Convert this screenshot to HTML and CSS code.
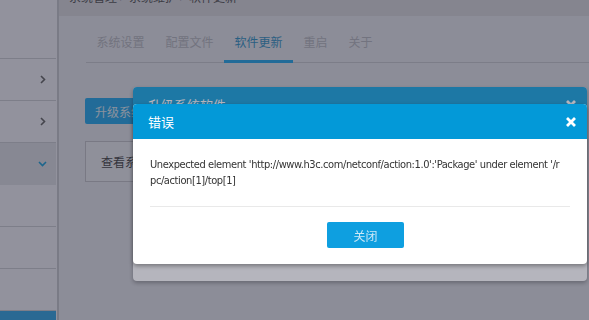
FILE: index.html
```html
<!DOCTYPE html>
<html lang="zh-CN">
<head>
  <meta charset="UTF-8">
  <title>软件更新</title>
  <meta name="viewport" content="width=device-width, initial-scale=1.0">
  <link rel="stylesheet" href="styles.css">
</head>
<body>

<div class="layout">
  <!-- Side menu -->
  <aside class="sidebar">
    <div class="nav-item nav-top"></div>
    <div class="nav-item">
      <svg class="arrow" width="6" height="9" viewBox="0 0 6 9"><path d="M1 1l3.5 3.5L1 8"/></svg>
    </div>
    <div class="nav-item">
      <svg class="arrow" width="6" height="9" viewBox="0 0 6 9"><path d="M1 1l3.5 3.5L1 8"/></svg>
    </div>
    <div class="nav-item open">
      <svg class="arrow down" width="9" height="6" viewBox="0 0 9 6"><path d="M1 1l3.5 3.5L8 1"/></svg>
    </div>
    <div class="nav-item"></div>
    <div class="nav-item"></div>
    <div class="nav-item"></div>
    <div class="nav-item active"></div>
  </aside>

  <!-- Main page -->
  <main class="main">
    <div class="crumb"><span>系统管理 &gt; 系统维护 &gt; 软件更新</span></div>
    <div class="content">
      <ul class="tabs">
        <li class="tab">系统设置</li>
        <li class="tab">配置文件</li>
        <li class="tab active">软件更新</li>
        <li class="tab">重启</li>
        <li class="tab">关于</li>
      </ul>
      <button class="primary-btn">升级系统软件</button>
      <div class="info-box">查看系统软件版本</div>
    </div>
  </main>
</div>

<!-- Upgrade dialog -->
<div class="mask"></div>
<div class="modal modal-upgrade">
  <div class="modal-header">
    <span>升级系统软件</span>
    <svg class="close-icon" width="12" height="12" viewBox="0 0 12 12"><path d="M2 2l8 8M10 2l-8 8"/></svg>
  </div>
</div>

<!-- Error dialog -->
<div class="mask mask-top"></div>
<div class="modal modal-error">
  <div class="modal-header">
    <span>错误</span>
    <svg class="close-icon" width="12" height="12" viewBox="0 0 12 12"><path d="M2 2l8 8M10 2l-8 8"/></svg>
  </div>
  <div class="modal-body">
    <p class="message">Unexpected element 'http://www.h3c.com/netconf/action:1.0':'Package' under element '/r<wbr>pc/action[1]/top[1]</p>
    <hr>
    <div class="modal-footer">
      <button class="ok-btn">关闭</button>
    </div>
  </div>
</div>

</body>
</html>
```

FILE: styles.css
```css
* {
  margin: 0;
  padding: 0;
  box-sizing: border-box;
}

body {
  width: 589px;
  height: 320px;
  overflow: hidden;
  background: #e8eaf0;
  font-family: "Noto Sans CJK SC", sans-serif;
  font-size: 12px;
  color: #333;
}

.layout {
  display: flex;
  height: 320px;
}

/* sidebar */
.sidebar {
  width: 59px;
  flex-shrink: 0;
  background: #f4f5fa;
  border-right: 2px solid #c4c6cc;
  padding-right: 1px;
  display: flex;
  flex-direction: column;
}

.nav-item {
  height: 42px;
  flex-shrink: 0;
  border-bottom: 1px solid #c9cbd1;
  display: flex;
  align-items: center;
  justify-content: flex-end;
  padding-right: 10px;
}

.nav-top {
  height: 59px;
}

.nav-item.open {
  background: #dde0e7;
  border-bottom-color: transparent;
}

.nav-item.active {
  flex: 1;
  background: #1ea0e6;
  border-bottom: none;
}

.arrow path {
  fill: none;
  stroke: #555;
  stroke-width: 1.6;
}

.arrow.down {
  margin-right: -1px;
}

.arrow.down path {
  stroke: #0399d8;
}

/* main */
.main {
  flex: 1;
  background: #e8eaf0;
}

.crumb {
  height: 16px;
  overflow: hidden;
  background: #d9d9de;
  padding-left: 10px;
}

.crumb span {
  display: block;
  margin-top: -10px;
  line-height: 14px;
  color: #444;
}

.content {
  padding: 8px 0 0 26px;
}

.tabs {
  display: flex;
  list-style: none;
  margin-left: 1px;
  border-bottom: 1px solid #c8cad0;
}

.tab {
  height: 39px;
  margin-bottom: -1px;
  padding: 0 10.5px;
  line-height: 36px;
  border-bottom: 3px solid transparent;
  color: #b3b5bc;
}

.tab.active {
  color: #1a8cc4;
  border-bottom-color: #0ea5f0;
}

.primary-btn {
  display: block;
  margin-top: 35px;
  height: 26px;
  padding: 0 10px;
  background: #0ea5f0;
  color: #e4f3fb;
  border: none;
  border-radius: 2px;
  font-family: inherit;
  font-size: 12px;
}

.info-box {
  margin-top: 17px;
  width: 420px;
  height: 41px;
  border: 1px solid #c0c2c8;
  background: #eef0f5;
  padding-left: 15px;
  line-height: 39px;
  color: #333;
}

/* dialogs */
.mask {
  position: fixed;
  left: 0;
  top: 0;
  width: 100%;
  height: 100%;
  background: rgba(0, 0, 0, 0.2);
}

.mask-top {
  background: rgba(70, 71, 90, 0.4);
}

.modal {
  position: fixed;
  left: 133px;
  width: 454px;
  background: #fff;
  border-radius: 4px;
  overflow: hidden;
  box-shadow: 0 2px 4px rgba(0, 0, 0, 0.35);
}

.modal-upgrade {
  top: 87px;
  height: 194px;
}

.modal-error {
  top: 104px;
}

.modal-header {
  height: 35px;
  background: #0399d8;
  color: #fff;
  font-size: 13px;
  display: flex;
  align-items: center;
  justify-content: space-between;
  padding: 0 10px 0 15px;
}

.close-icon path {
  stroke: #fff;
  stroke-width: 2.8;
}

.modal-body {
  padding: 18px 15px 16px 17px;
}

.message {
  font-family: "DejaVu Sans Condensed", "Liberation Sans Narrow", sans-serif;
  font-size: 11px;
  letter-spacing: -0.4px;
  line-height: 16px;
  color: #333;
}

hr {
  border: none;
  border-top: 1px solid #e9e9e9;
  margin: 17px 2px 15px 0;
}

.modal-footer {
  display: flex;
  justify-content: center;
  padding-left: 9px;
}

.ok-btn {
  width: 77px;
  height: 26px;
  background: #0e9fe0;
  color: #cbe8f7;
  border: none;
  border-radius: 2px;
  font-family: inherit;
  font-size: 12px;
}
```
